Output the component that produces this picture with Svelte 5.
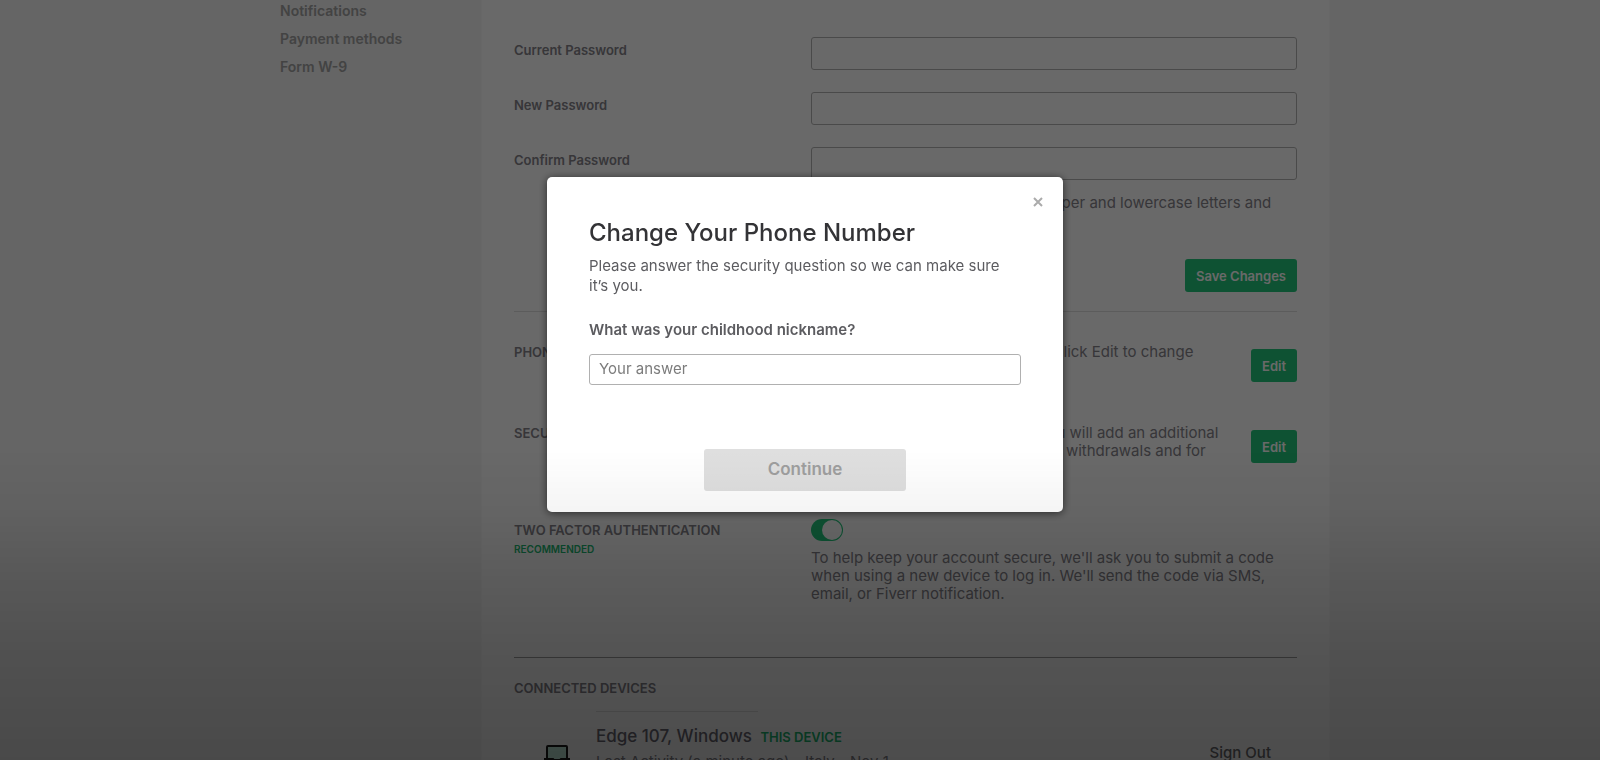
<script>
	let answer = $state('');
	let twoFactor = $state(true);
	let open = $state(true);

	const menu = ['Notifications', 'Payment methods', 'Form W-9'];
	const fields = [
		{ id: 'current', label: 'Current Password' },
		{ id: 'new', label: 'New Password' },
		{ id: 'confirm', label: 'Confirm Password' }
	];
</script>

<div class="page">
	<div class="layout">
		<nav class="sidebar">
			{#each menu as item}
				<a href="#settings">{item}</a>
			{/each}
		</nav>

		<main class="card">
			<form class="passwords">
				{#each fields as field}
					<div class="row">
						<label for={field.id}>{field.label}</label>
						<input id={field.id} type="password" />
					</div>
				{/each}
				<p class="hint">8 characters or longer. Combine upper and lowercase letters and numbers.</p>
				<button type="button" class="green save">Save Changes</button>
			</form>

			<section class="row setting phone">
				<h3>PHONE VERIFICATION</h3>
				<div class="detail">
					<p>Your phone is verified with Fiverr. Click Edit to change your phone number</p>
					<button type="button" class="green">Edit</button>
				</div>
			</section>

			<section class="row setting security">
				<h3>SECURITY QUESTION</h3>
				<div class="detail">
					<p>By creating a security question, you will add an additional layer of protection for your revenue withdrawals and for changing your password.</p>
					<button type="button" class="green">Edit</button>
				</div>
			</section>

			<section class="row setting factor">
				<div class="heading">
					<h3>TWO FACTOR AUTHENTICATION</h3>
					<span class="recommended">RECOMMENDED</span>
				</div>
				<div>
					<input type="checkbox" class="toggle" aria-label="Two factor authentication" bind:checked={twoFactor} />
					<p>To help keep your account secure, we'll ask you to submit a code when using a new device to log in. We'll send the code via SMS, email, or Fiverr notification.</p>
				</div>
			</section>

			<section class="devices">
				<h3>CONNECTED DEVICES</h3>
				<div class="device">
					<svg width="26" height="24" viewBox="0 0 26 24" aria-hidden="true">
						<rect x="3" y="1" width="20" height="14" rx="1" fill="#c3efdc" stroke="#1c1c1c" stroke-width="2" />
						<path d="M1 14h8l2 2h4l2-2h8v4H1z" fill="#fff" stroke="#1c1c1c" stroke-width="2" />
					</svg>
					<div class="info">
						<h4>Edge 107, Windows <span>THIS DEVICE</span></h4>
						<p>Last Activity (a minute ago) - Italy - Nov 1</p>
					</div>
					<button type="button" class="signout">Sign Out</button>
				</div>
			</section>
		</main>
	</div>
</div>

{#if open}
	<div class="backdrop">
		<div class="modal" role="dialog" aria-modal="true" aria-labelledby="modal-title">
			<button type="button" class="close" aria-label="Close" onclick={() => (open = false)}>
				<svg width="10" height="10" viewBox="0 0 10 10" aria-hidden="true">
					<path d="M1 1l8 8M9 1L1 9" stroke="#ababab" stroke-width="2" />
				</svg>
			</button>
			<h2 id="modal-title">Change Your Phone Number</h2>
			<p>Please answer the security question so we can make sure it’s you.</p>
			<label for="answer">What was your childhood nickname?</label>
			<input id="answer" type="text" placeholder="Your answer" bind:value={answer} />
			<button type="button" class="continue" disabled={!answer}>Continue</button>
		</div>
	</div>
{/if}
<div class="shade"></div>

<style>
	:global(body) {
		margin: 0;
		background: #f5f5f5;
	}

	.page,
	.backdrop {
		font-family: Inter, 'Liberation Sans', sans-serif;
		font-size: 15px;
		line-height: 18px;
		box-sizing: border-box;
		padding-left: 10px;
	}

	.page {
		height: 100vh;
		overflow: hidden;
		color: #85838a;
	}

	.page *,
	.backdrop * {
		box-sizing: border-box;
	}

	button,
	input {
		font-family: inherit;
	}

	p,
	h2,
	h3,
	h4 {
		margin: 0;
	}

	.layout {
		display: flex;
		max-width: 1050px;
		margin: 0 auto;
	}

	.sidebar {
		display: flex;
		flex-direction: column;
		gap: 10px;
		width: 201px;
		padding-top: 2px;
	}

	.sidebar a {
		color: #a3a3a3;
		font-size: 14px;
		font-weight: 600;
		text-decoration: none;
	}

	.card {
		flex: 1;
		min-height: 100vh;
		padding: 37px 32px 0;
		background: #fff;
		border: solid #f9f9f9;
		border-width: 0 1px;
	}

	.row {
		display: grid;
		grid-template-columns: 297px 1fr;
	}

	.passwords {
		display: flex;
		flex-direction: column;
		gap: 22px;
		padding-bottom: 19px;
		border-bottom: 1px solid #e0e0e0;
	}

	.row label {
		padding-top: 4px;
		font-size: 13px;
		font-weight: 600;
	}

	.row input[type='password'] {
		height: 33px;
		background: transparent;
		border: 1px solid #b4b4b4;
		border-radius: 3px;
	}

	.hint {
		margin: -8px 0 7px 297px;
	}

	.green {
		height: 33px;
		padding: 0 11px;
		border: 0;
		border-radius: 3px;
		background: #23c77c;
		color: #fff;
		font-size: 13px;
		font-weight: 600;
	}

	.save {
		align-self: flex-end;
	}

	h3 {
		font-size: 13px;
		font-weight: 600;
		line-height: 18px;
	}

	.detail {
		display: flex;
		justify-content: space-between;
		align-items: flex-start;
		gap: 24px;
	}

	.phone {
		min-height: 80px;
		padding-top: 31px;
	}

	.detail .green {
		flex: none;
		margin-top: 6px;
	}

	.security {
		padding-top: 32px;
	}

	.factor {
		padding: 41px 0 54px;
		border-bottom: 1px solid #a0a0a0;
	}

	.heading {
		padding-top: 2px;
	}

	.recommended {
		color: #20b871;
		font-size: 10px;
		font-weight: 600;
	}

	.toggle {
		display: block;
		position: relative;
		appearance: none;
		width: 32px;
		height: 22px;
		margin: 0 0 8px;
		border-radius: 11px;
		background: #ccc;
	}

	.toggle:checked {
		background: #23c77c;
	}

	.toggle::after {
		content: '';
		position: absolute;
		top: 1px;
		left: 1px;
		width: 20px;
		height: 20px;
		border-radius: 50%;
		background: #fff;
	}

	.toggle:checked::after {
		left: 11px;
	}

	.devices {
		padding-top: 21px;
	}

	.device {
		display: flex;
		padding: 14px 26px 0 30px;
	}

	.device svg {
		margin-top: 34px;
	}

	.info {
		flex: 1;
		margin-left: 26px;
	}

	.info::before {
		content: '';
		display: block;
		width: 162px;
		border-top: 1px solid #e0e0e0;
	}

	.info h4 {
		padding: 14px 0 6px;
		color: #6c6a74;
		font-size: 17px;
		font-weight: 500;
		line-height: 20px;
	}

	.info h4 span {
		margin-left: 4px;
		color: #20b871;
		font-size: 13px;
		font-weight: 600;
	}

	.signout {
		align-self: flex-start;
		margin-top: 33px;
		padding: 0;
		border: 0;
		background: none;
		color: #6c6c70;
		font-size: 15px;
		font-weight: 500;
		line-height: 18px;
	}

	.backdrop {
		position: fixed;
		inset: 0;
		padding-top: 177px;
		background: rgba(0, 0, 0, 0.59);
	}

	.modal {
		position: relative;
		display: flex;
		flex-direction: column;
		max-width: 516px;
		margin: 0 auto;
		padding: 41px 42px 21px;
		border-radius: 5px;
		background: #fff;
		box-shadow: 0 1px 8px rgba(0, 0, 0, 0.6);
		color: #5c5c60;
	}

	.close {
		position: absolute;
		top: 18px;
		right: 18px;
		display: flex;
		padding: 2px;
		border: 0;
		background: none;
	}

	h2 {
		color: #333336;
		font-size: 24px;
		font-weight: 500;
		line-height: 30px;
	}

	.modal p {
		margin-top: 8px;
		line-height: 20px;
	}

	.modal label {
		margin-top: 25px;
		font-weight: 600;
	}

	.modal input {
		height: 31px;
		margin-top: 15px;
		padding: 0 9px 2px;
		border: 1px solid #b0b0b0;
		border-radius: 3px;
		color: #404145;
		font-size: 15px;
	}

	.modal input::placeholder {
		color: #7c7c7c;
		opacity: 1;
	}

	.continue {
		align-self: center;
		width: 202px;
		height: 42px;
		margin-top: 64px;
		padding-bottom: 3px;
		border: 0;
		border-radius: 3px;
		background: #dfdfdf;
		color: #9e9e9e;
		font-size: 17px;
		font-weight: 600;
	}

	/* darkens the lower part of the window, dialog included */
	.shade {
		position: fixed;
		inset: 450px 0 0;
		background: linear-gradient(
			rgba(0, 0, 0, 0),
			rgba(0, 0, 0, 0.04) 19%,
			rgba(0, 0, 0, 0.12) 40%,
			rgba(0, 0, 0, 0.2) 65%,
			rgba(0, 0, 0, 0.27)
		);
		pointer-events: none;
	}
</style>
